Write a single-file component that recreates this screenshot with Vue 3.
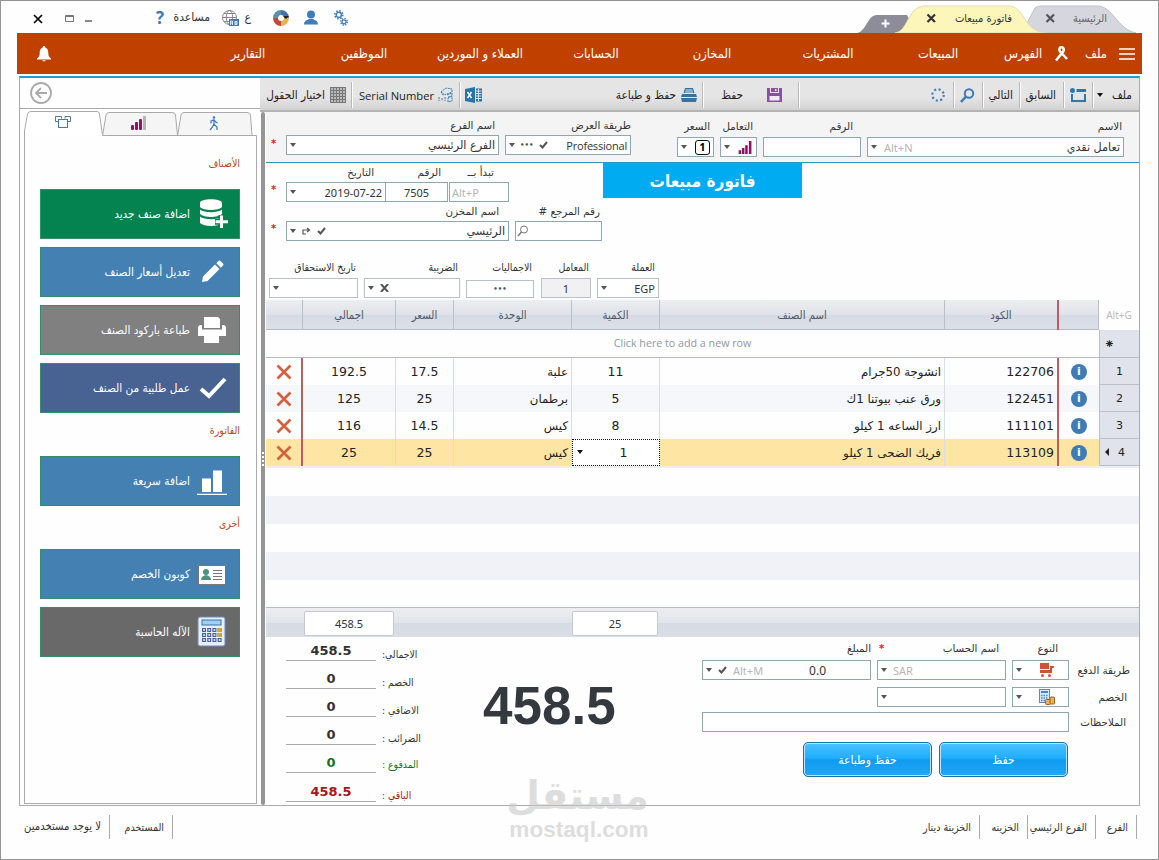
<template>
  <div class="window">
    <header class="titlebar">
      <svg class="win-close" viewBox="0 0 10 10"><path d="M1 1l8 8M9 1l-8 8" stroke="#000" stroke-width="1.7" /></svg>
      <svg class="win-max" viewBox="0 0 10 8"><path d="M.5 .5h8v6h-8zM.5 1.5h8" fill="none" stroke="#777" /></svg>
      <i class="win-min"></i>
      <b class="help">?</b>
      <span class="help-text ar">مساعدة</span>
      <svg class="globe" viewBox="0 0 17 17">
        <g fill="none" stroke="#888" stroke-width="1">
          <circle cx="7.5" cy="7.5" r="7" />
          <ellipse cx="7.5" cy="7.5" rx="3.2" ry="7" />
          <path d="M.5 7.5h14M2 3.5h11M2 11.5h11" />
        </g>
        <rect x="7" y="9" width="10" height="7" fill="#3f78b5" />
        <path d="M8.500 15v-4h2v4M8.500 13h2M13 11v4M13 11.500h2v3h-2M13 13h2" fill="none" stroke="#fff" stroke-width=".8" />
      </svg>
      <span class="lang ar">ع</span>
      <svg class="wheel" viewBox="0 0 16 16">
        <g fill="none" stroke-width="5">
          <path d="M8 2.500a5.500 5.500 0 0 1 5.500 5.500" stroke="#466fae" />
          <path d="M13.500 8a5.500 5.500 0 0 1-5.500 5.500" stroke="#e8b34c" />
          <path d="M8 13.500a5.500 5.500 0 0 1-5.500-5.500" stroke="#c8453a" />
          <path d="M2.500 8a5.500 5.500 0 0 1 5.500-5.500" stroke="#5794a6" />
        </g>
        <path d="M10 6h6l-3 3z" fill="#222" />
      </svg>
      <svg class="user" viewBox="0 0 14 15"><circle cx="7" cy="4.500" r="4" fill="#3f7dbb" /><path d="M0 14.500c0-4 3-4 5-5.500h4c2 1.500 5 1.500 5 5.500z" fill="#3f7dbb" /></svg>
      <svg class="gears" viewBox="0 0 14 16">
        <g fill="none" stroke="#3f7dbb">
          <circle cx="4.800" cy="4.800" r="2.600" stroke-width="1.400" />
          <circle cx="4.800" cy="4.800" r="4" stroke-width="1.600" stroke-dasharray="1.500 1.640" />
          <circle cx="10" cy="11.800" r="2" stroke-width="1.300" />
          <circle cx="10" cy="11.800" r="3.300" stroke-width="1.500" stroke-dasharray="1.300 1.290" />
        </g>
      </svg>

      <div class="doc-tabs">
        <svg viewBox="0 0 284 28">
          <path d="M0 28C10 26 10 10 20 10H50L60 28z" fill="#8d8d99" />
          <path d="M165 28L178 3Q180 1 184 1H240C256 1 260 24 279 28z" fill="#d6d7de" stroke="#bfc0c8" />
          <path d="M38 28C52 26 50 1 68 1H151C168 1 166 26 188 28z" fill="#fcf6ba" stroke="#e3dcb0" />
          <path d="M24.500 18.500h8M28.500 14.500v8" stroke="#fff" stroke-width="2" />
          <path d="M70.500 9.500l7.500 7.500M78 9.500l-7.500 7.500" stroke="#333" stroke-width="2.200" />
          <path d="M189.500 9.500l7.500 7.500M197 9.500l-7.500 7.500" stroke="#555" stroke-width="2.200" />
        </svg>
        <span class="doc-active ar">فاتورة مبيعات</span>
        <span class="doc-home ar">الرئيسية</span>
      </div>
    </header>

    <nav class="menu">
      <svg class="bell" viewBox="0 0 14 16"><path d="M7 0c1 0 1.200.7 1.200 1.400C11 2.300 11.300 5 11.300 7c0 3 .7 4 2.700 5.500v1H0v-1C2 11 2.700 10 2.700 7c0-2 .3-4.700 3.100-5.600C5.800.7 6 0 7 0zM5.300 14.200h3.400c-.2 1.600-3.200 1.600-3.400 0z" fill="#fff" /></svg>
      <span v-for="item in menu" :key="item" class="ar">{{ item }}</span>
      <svg class="ribbon" viewBox="0 0 13 16"><path d="M1 14.500L8.500 5C9.300 3 8.300 1.200 6.500 1.200S4 3 4.700 5L12 13" fill="none" stroke="#fff" stroke-width="2.500" /></svg>
      <span class="ar">ملف</span>
      <svg class="burger" viewBox="0 0 16 12"><path d="M0 1h16M0 6h16M0 11h16" stroke="#fff" stroke-width="1.300" /></svg>
    </nav>

    <div class="frame">
      <aside>
        <div class="back">
          <svg viewBox="0 0 22 22"><circle cx="11" cy="11" r="10" fill="none" stroke="#aaa" stroke-width="1.800" /><path d="M17 11H6M11 6l-5 5 5 5" fill="none" stroke="#aaa" stroke-width="1.800" /></svg>
        </div>
        <svg class="side-tabs" viewBox="0 0 233 28">
          <g fill="#f5f5f5" stroke="#aaa">
            <path d="M78.500 27L82 6Q82.500 3.500 85 3.500H148Q151 3.500 151.500 6L153.500 26.500" />
            <path d="M153.500 27L157 6Q157.500 3.500 160 3.500H223Q226 3.500 226.500 6L228 26.500" />
          </g>
          <path d="M.5 28V22L3.500 5Q4 2.500 7 2.500H73Q75 2.500 75.500 5L78.500 26.500H232.500V28" fill="#fff" stroke="#aaa" />
          <g fill="#fff" stroke="#4d7a97"><path d="M36 12.500h-4.500v-5h6v2M41 9.500v-2h5.500v5H44" /><rect x="34.500" y="10.500" width="9" height="8" /></g>
          <g fill="#970d67"><rect x="107" y="16" width="3" height="5" rx="1" /><rect x="111" y="13" width="3" height="8" rx="1" /><rect x="115" y="10" width="3" height="11" rx="1" /></g>
          <rect x="119" y="7" width="3" height="14" fill="#b5b5b5" />
          <g fill="none" stroke="#3f7dbb" stroke-width="1.300"><circle cx="190" cy="8.500" r="1.300" fill="#3f7dbb" stroke="none" /><path d="M190 10.500v5l3 2.500v3M190 15l-1.500 3-2.500 3M187 14.500v-2.500l3-1.200 1.500 2 2 1.200" /></g>
        </svg>
        <div class="side-panel">
          <h4 class="ar">الأصناف</h4>
          <button class="green">
            <span class="ar">اضافة صنف جديد</span>
            <svg viewBox="0 0 34 34"><g fill="#fff"><path d="M4 6c0-5 22-5 22 0v4c-3 4-19 4-22 0zM4 12.500c4 3.500 18 3.500 22 0V17c-4 4-18 4-22 0zM4 19.500c4 3.500 18 3.500 22 0V26c-4 4-18 4-22 0z" /></g><path d="M25.500 18v13.500M19 24.700h13" stroke="#048351" stroke-width="6" /><path d="M25.500 18.500v12.500M19.500 24.700H32" stroke="#fff" stroke-width="3" /></svg>
          </button>
          <button class="blue">
            <span class="ar">تعديل أسعار الصنف</span>
            <svg viewBox="0 0 34 34"><path d="M6 27l1-5.500 12-12 4.500 4.500-12 12zM20.300 8.200l2.200-2.200q1-1 2 0l2.500 2.500q1 1 0 2l-2.200 2.200z" fill="#fff" /></svg>
          </button>
          <button class="gray">
            <span class="ar">طباعة باركود الصنف</span>
            <svg viewBox="0 0 34 34"><path d="M8 4h14l2 2v9H8z" fill="#fff" /><path d="M2 15q0-3 3-3h1v4.500h20V12h1q3 0 3 3v8H2z" fill="#fff" /><path d="M8 21h15v9H8z" fill="#fff" /></svg>
          </button>
          <button class="navy">
            <span class="ar">عمل طلبية من الصنف</span>
            <svg viewBox="0 0 34 34"><path d="M5 18l8 7L29 8" fill="none" stroke="#fff" stroke-width="4" /></svg>
          </button>
          <h4 class="ar mid">الفاتورة</h4>
          <button class="blue">
            <span class="ar">اضافة سريعة</span>
            <svg viewBox="0 0 34 34"><path d="M6 14.500h9V28H6zM17 6.500h9V28h-9zM1 29.800h30v1.200H1z" fill="#fff" /></svg>
          </button>
          <h4 class="ar mid">أخرى</h4>
          <button class="blue">
            <span class="ar">كوبون الخصم</span>
            <svg viewBox="0 0 34 34"><rect x="2.500" y="8.500" width="27" height="19" fill="#fff" stroke="#777" /><circle cx="10" cy="15" r="3" fill="#4d9382" /><path d="M5 23q0-4 5-5 5 1 5 5z" fill="#4d9382" /><path d="M17 13.500h9M17 16.500h9M17 19.500h9M17 22.500h9" stroke="#777" /></svg>
          </button>
          <button class="dark">
            <span class="ar">الآله الحاسبة</span>
            <svg viewBox="0 0 34 34">
              <rect x="2" y="2" width="27" height="29" rx="2" fill="#e6effb" stroke="#6f8cba" /><rect x="6" y="5" width="19" height="5" fill="#9ed0ef" stroke="#3d75ad" />
              <path d="M6 15h20M6 20h20M6 25h20" stroke="#4562a5" stroke-width="4" stroke-dasharray="4 1.200" /><path d="M7.200 15h18M7.200 20h18M7.200 25h18" stroke="#fff" stroke-width="1.600" stroke-dasharray="1.700 3.500" />
              <path d="M21.700 15h4M21.700 20h4" stroke="#d7a33a" stroke-width="4" />
            </svg>
          </button>
        </div>
      </aside>

      <main>
        <div class="toolbar">
          <div class="c1"><span class="ar">اختيار الحقول</span>
            <svg width="16" height="16" viewBox="0 0 16 16"><rect width="16" height="16" fill="#bbb" /><path d="M.5 0v16M3.500 0v16M6.500 0v16M9.500 0v16M12.500 0v16M15.500 0v16M0 .5h16M0 3.500h16M0 6.500h16M0 9.500h16M0 12.500h16M0 15.500h16" stroke="#777" /></svg>
          </div>
          <div class="c2"><span class="serial">Serial Number</span>
            <svg width="16" height="16" viewBox="0 0 16 16"><path d="M3 5l5-4 6 1v3l-5 2-4 1zM9 8l5-2v3l-4 1M10 11l4-2v5l-4 1zM1 10v4M4 11v3M7 10v4M3 5l3 2" fill="none" stroke="#4080b0" stroke-dasharray="2 .7" /></svg>
          </div>
          <div class="c3">
            <svg width="17" height="16" viewBox="0 0 17 16"><path d="M0 2l10-2v16L0 14zM11 1.500h6v13h-6z" fill="#2474ae" /><path d="M11 4h5.500M11 6.500h5.500M11 9h5.500M11 11.500h5.500M13.500 2v12" stroke="#e4e4e4" /><path d="M2.500 5l4 6M6.500 5l-4 6" stroke="#fff" stroke-width="1.500" /></svg>
            <span class="ar">حفظ و طباعة</span>
            <svg width="16" height="14" viewBox="0 0 16 14"><path d="M4 0h8l1.500 5h-11zM1 6h14l1 3H0zM0 10h16l-1 4H1z" fill="#2f76a8" /><path d="M4.500 2h7M4 4h8" stroke="#e4e4e4" /></svg>
          </div>
          <div class="c4"><span class="ar">حفظ</span>
            <svg width="15" height="14" viewBox="0 0 15 14"><path d="M0 0h3v5h9V0h3v14H0z" fill="#8a4fa3" /><path d="M4 0h7v4H4z" fill="#8a4fa3" /><path d="M8 1h1.500v2H8zM2.500 8h10v4.500h-10z" fill="#eee" /></svg>
          </div>
          <div class="c5">
            <svg width="14" height="14" viewBox="0 0 14 14"><circle cx="7" cy="7" r="5.700" fill="none" stroke="#3f7dbb" stroke-width="2.200" stroke-dasharray="2 2.470" /></svg>
          </div>
          <div class="c6">
            <svg width="15" height="15" viewBox="0 0 15 15"><circle cx="9" cy="5.500" r="4.200" fill="none" stroke="#3d7ab5" stroke-width="2" /><path d="M6 8.500L1 14" stroke="#3d7ab5" stroke-width="2.600" /></svg>
          </div>
          <div class="c7"><span class="ar">التالي</span></div>
          <div class="c8"><span class="ar">السابق</span></div>
          <div class="c9">
            <svg width="16" height="15" viewBox="0 0 16 15"><circle cx="2.500" cy="2.500" r="2.500" fill="#2f78ac" /><path d="M6.500 1H16v3H6.500zM1 6h2v6h11V6h2v8H1z" fill="#2f78ac" /></svg>
          </div>
          <div class="c10"><i class="caret dark"></i><span class="ar">ملف</span></div>
        </div>

        <div class="body">
          <div class="splitter"><i></i></div>
          <div class="content">
            <section class="party">
              <b class="star">*</b>
              <div class="field branch"><label>اسم الفرع</label><div class="box"><i class="caret"></i><span class="ar end">الفرع الرئيسي</span></div></div>
              <div class="field view"><label>طريقة العرض</label><div class="box"><i class="caret"></i><b class="dots">•••</b><svg class="tick" viewBox="0 0 9 8"><path d="M1 4l2.500 2.500L8 1" fill="none" stroke="#555" stroke-width="2" /></svg><span class="end pro">Professional</span></div></div>
              <div class="field price low"><label>السعر</label><div class="box"><i class="caret"></i><b class="one end">1</b></div></div>
              <div class="field deal low"><label>التعامل</label><div class="box"><i class="caret"></i><svg class="bars end" viewBox="0 0 15 15"><path d="M1.500 15v-4M5 15V8.500M8.500 15V5.500M12.500 15V1" stroke="#970d67" stroke-width="2.700" /></svg></div></div>
              <div class="field no low"><label>الرقم</label><div class="box"></div></div>
              <div class="field name low"><label>الاسم</label><div class="box"><i class="caret"></i><span class="hint">Alt+N</span><span class="ar end">تعامل نقدي</span></div></div>
            </section>

            <section class="doc">
              <div class="doc-left">
                <div class="row first">
                  <b class="star">*</b>
                  <div class="field date"><label>التاريخ</label><div class="box"><i class="caret"></i><span class="end">2019-07-22</span></div></div>
                  <div class="field num"><label>الرقم</label><div class="box center">7505</div></div>
                  <div class="field starts"><label>تبدأ بــ</label><div class="box"><span class="hint">Alt+P</span></div></div>
                </div>
                <div class="row">
                  <b class="star">*</b>
                  <div class="field store"><label>اسم المخزن</label><div class="box"><i class="caret"></i><svg class="turn" viewBox="0 0 9 8"><path d="M4 7H1V3h6M5 1l2.500 2L5 5" fill="none" stroke="#555" stroke-width="1.200" /></svg><svg class="tick" viewBox="0 0 9 8"><path d="M1 4l2.500 2.500L8 1" fill="none" stroke="#555" stroke-width="2" /></svg><span class="ar end">الرئيسي</span></div></div>
                  <div class="field ref"><label>رقم المرجع #</label><div class="box"><svg class="lens" viewBox="0 0 12 12"><circle cx="7" cy="4.500" r="3.500" fill="none" stroke="#777" /><path d="M4.500 7L1 11" stroke="#777" stroke-width="1.500" /></svg></div></div>
                </div>
                <div class="row last">
                  <div class="field due"><label>تاريخ الاستحقاق</label><div class="box"><i class="caret"></i></div></div>
                  <div class="field tax"><label>الضريبة</label><div class="box"><i class="caret"></i><svg class="tick" viewBox="0 0 9 8"><path d="M1 0l7 8M8 0L1 8" stroke="#555" stroke-width="2" /></svg></div></div>
                  <div class="field sums"><label>الاجماليات</label><div class="box center"><b class="dots">•••</b></div></div>
                  <div class="field factor"><label>المعامل</label><div class="box center">1</div></div>
                  <div class="field currency"><label>العملة</label><div class="box"><i class="caret"></i><span class="end">EGP</span></div></div>
                </div>
              </div>
              <h1 class="ar">فاتورة مبيعات</h1>
            </section>

            <section class="items">
              <div class="line head">
                <span></span><span class="ar">اجمالي</span><span class="ar">السعر</span><span class="ar">الوحدة</span><span class="ar">الكمية</span><span class="ar">اسم الصنف</span><span class="ar code">الكود</span><span></span><span class="corner">Alt+G</span>
              </div>
              <div class="add"><span>Click here to add a new row</span><b>⁕</b></div>
              <div v-for="(row, i) in rows" :key="row.code" class="line data" :class="{ odd: i % 2, active: i === 3 }">
                <span class="del"><svg viewBox="0 0 16 16"><path d="M1.500 1.500l13 13M14.500 1.500l-13 13" stroke="#d2613f" stroke-width="2.700" /></svg></span>
                <span>{{ row.total }}</span>
                <span>{{ row.price }}</span>
                <span class="ar right">{{ row.unit }}</span>
                <span class="qty"><i v-if="i === 3" class="caret dark"></i>{{ row.qty }}</span>
                <span class="ar right">{{ row.name }}</span>
                <span class="right code">{{ row.code }}</span>
                <span class="info"><b>i</b></span>
                <span class="index"><i v-if="i === 3"></i>{{ i + 1 }}</span>
              </div>
              <div class="empty"></div>
              <div class="sum"><span class="sum-total">458.5</span><span class="sum-qty">25</span></div>
            </section>

            <section class="bottom">
              <div class="totals">
                <div v-for="t in totals" :key="t.label" :class="t.tone"><b>{{ t.value }}</b><span class="ar">{{ t.label }}</span></div>
              </div>
              <div class="grand">458.5</div>
              <div class="pay">
                <div class="pay-labels"><label>المبلغ</label><b class="star">*</b><label>اسم الحساب</label><label>النوع</label></div>
                <div class="pay-row">
                  <div class="box amount"><i class="caret"></i><svg class="tick" viewBox="0 0 9 8"><path d="M1 4l2.500 2.500L8 1" fill="none" stroke="#555" stroke-width="2" /></svg><span class="hint">Alt+M</span><span class="zero">0.0</span></div>
                  <div class="box account"><i class="caret"></i><span class="hint">SAR</span></div>
                  <div class="box type"><i class="caret"></i><svg class="type-icon" viewBox="0 0 16 16"><path d="M1 1h9v6H1zM1 8h10V4h4v2h-2v5H1z" fill="#d0532f" /><circle cx="3.500" cy="13.500" r="1.500" fill="#d0532f" /><circle cx="10.500" cy="13.500" r="1.500" fill="#d0532f" /></svg></div>
                  <label>طريقة الدفع</label>
                </div>
                <div class="pay-row second">
                  <div class="box account"><i class="caret"></i></div>
                  <div class="box type"><i class="caret"></i><svg class="type-icon" viewBox="0 0 16 16"><rect x=".5" y=".5" width="10" height="13" fill="#dbe9fa" stroke="#5b87c5" /><path d="M2 3h7" stroke="#4b83c5" stroke-width="2" /><path d="M2 6.500h7M2 9h7M2 11.500h7" stroke="#5b7fb5" stroke-width="1.500" stroke-dasharray="1.500 1" /><rect x="6.500" y="10.500" width="5" height="5" rx="1" fill="#eeb05a" stroke="#a0611f" /><rect x="11" y="8" width="4.500" height="7" rx="1" fill="#eeb05a" stroke="#a0611f" /></svg></div>
                  <label>الخصم</label>
                </div>
                <div class="pay-row third"><div class="box notes"></div><label>الملاحظات</label></div>
                <div class="actions"><button class="ar">حفظ وطباعة</button><button class="ar">حفظ</button></div>
              </div>
            </section>
          </div>
        </div>
      </main>
    </div>

    <footer>
      <span class="ar f1">لا يوجد مستخدمين</span><span class="ar f2">المستخدم</span>
      <span class="ar f3">الخزينة دينار</span><span class="ar f4">الخزينه</span><span class="ar f5">الفرع الرئيسي</span><span class="ar f6">الفرع</span>
    </footer>
    <div class="watermark"><b class="ar">مستقل</b><span>mostaql.com</span></div>
  </div>
</template>

<script setup>
const menu = ["التقارير", "الموظفين", "العملاء و الموردين", "الحسابات", "المخازن", "المشتريات", "المبيعات", "الفهرس"];

const rows = [
  { code: "122706", name: "انشوجة 50جرام", qty: 11, unit: "علبة", price: "17.5", total: "192.5" },
  { code: "122451", name: "ورق عنب بيوتنا 1ك", qty: 5, unit: "برطمان", price: "25", total: "125" },
  { code: "111101", name: "ارز الساعه 1 كيلو", qty: 8, unit: "كيس", price: "14.5", total: "116" },
  { code: "113109", name: "فريك الضحى 1 كيلو", qty: 1, unit: "كيس", price: "25", total: "25" }
];

const totals = [
  { label: "الاجمالي:", value: "458.5" },
  { label: "الخصم :", value: "0" },
  { label: "الاضافي :", value: "0" },
  { label: "الضرائب :", value: "0" },
  { label: "المدفوع :", value: "0", tone: "paid" },
  { label: "الباقي :", value: "458.5", tone: "rest" }
];
</script>

<style>
body {
  margin: 0;
  overflow: hidden;
}
</style>

<style scoped>
* {
  box-sizing: border-box;
}

.window {
  position: relative;
  width: 1159px;
  height: 860px;
  border: 1px solid #949494;
  background: #fefefe;
  color: #333;
  font: 11px "Noto Sans", sans-serif;
}

.ar,
label {
  direction: rtl;
  white-space: nowrap;
  font-family: "DejaVu Sans Condensed", "DejaVu Sans", sans-serif;
}

svg {
  display: block;
  flex: none;
}

button {
  padding: 0;
  cursor: pointer;
}

/* title bar */
.titlebar {
  display: flex;
  align-items: center;
  height: 32px;
}

.win-close {
  width: 10px;
  height: 10px;
  margin: 3px 0 0 32px;
}

.win-max {
  width: 10px;
  height: 8px;
  margin: 3px 0 0 22px;
}

.win-min {
  width: 7px;
  height: 2px;
  margin: 8px 0 0 10px;
  background: #888;
}

.help {
  width: 9px;
  margin-left: 64px;
  color: #3f78b5;
  font: bold 17px "Open Sans", sans-serif;
}

.help-text {
  width: 38px;
  margin-left: 7px;
  font-size: 12px;
}

.globe {
  width: 17px;
  height: 17px;
  margin: 2px 0 0 12px;
}

.lang {
  width: 7px;
  margin-left: 5px;
  font-size: 12px;
}

.wheel {
  width: 16px;
  height: 16px;
  margin: 1px 0 0 22px;
}

.user {
  width: 14px;
  height: 15px;
  margin: 1px 0 0 15px;
}

.gears {
  width: 14px;
  height: 16px;
  margin: 2px 0 0 16px;
}

.doc-tabs {
  position: relative;
  width: 284px;
  height: 28px;
  margin: 4px 17px 0 auto;
  font-size: 11px;
}

.doc-tabs svg {
  width: 284px;
  height: 28px;
}

.doc-active,
.doc-home {
  position: absolute;
  top: 7px;
}

.doc-active {
  right: 129px;
}

.doc-home {
  right: 34px;
  color: #666;
}

/* main menu */
.menu {
  display: grid;
  grid-template-columns: 173px repeat(6, 116px) 104px 66px 20px 40px 26px;
  align-items: center;
  height: 41px;
  margin: 0 16px;
  background: #c04000;
  color: #fff;
  font-size: 12.800px;
  line-height: 16px;
  text-align: center;
}

.bell {
  width: 14px;
  height: 16px;
  margin-left: 20px;
}

.ribbon {
  width: 13px;
  height: 16px;
  margin-left: -1px;
}

.burger {
  width: 16px;
  height: 12px;
  margin-left: 3px;
}

/* frame */
.frame {
  display: flex;
  width: 1121px;
  height: 730px;
  margin: 2px 0 0 18px;
  border: 1px solid #aaa;
  border-top: 2px solid #1c9fd3;
}

aside {
  width: 240px;
}

.back {
  height: 31px;
  padding: 4px 0 0 10px;
  border-bottom: 1px solid #aaa;
}

.back svg {
  width: 22px;
  height: 22px;
}

.side-tabs {
  width: 233px;
  height: 28px;
  margin-left: 4px;
}

.side-panel {
  width: 233px;
  height: 667px;
  margin-left: 4px;
  padding: 19px 16px 0 15px;
  border: 1px solid #aaa;
  border-top: 0;
}

.side-panel h4 {
  height: 14px;
  margin: 0 0 19px;
  color: #b5481d;
  font-size: 10.500px;
  font-weight: normal;
  line-height: 14px;
}

.side-panel h4.mid {
  margin-top: 10px;
}

.side-panel button {
  display: flex;
  align-items: center;
  justify-content: flex-end;
  gap: 6px;
  width: 200px;
  height: 50px;
  margin-bottom: 8px;
  padding-right: 9px;
  border: 1px solid #2f9168;
  color: #fff;
  font-size: 11.700px;
}

.side-panel button svg {
  width: 34px;
  height: 34px;
}

.green {
  background: #048351;
}

.blue {
  background: #4580b3;
}

.gray {
  background: #808080;
}

.navy {
  background: #486292;
}

.side-panel .dark {
  background: #696969;
}

/* toolbar */
main {
  width: 879px;
}

.toolbar {
  display: flex;
  width: 879px;
  height: 34px;
  padding-bottom: 2px;
  border-bottom: 2px solid #b2b2b2;
  background: linear-gradient(#e5e5e5 60%, #d2d2d2);
  color: #222;
  font-size: 11.700px;
}

.toolbar > div {
  display: flex;
  align-items: center;
  justify-content: flex-end;
  margin: 4px 0 0;
  border-right: 1px solid #fff;
  box-shadow: inset -1px 0 #b9b9b9;
}

.toolbar .c1 {
  width: 93px;
  gap: 5px;
  padding-right: 6px;
}

.toolbar .c2 {
  width: 108px;
  gap: 4px;
  padding-right: 6px;
}

.serial {
  white-space: nowrap;
  font: 11.200px "Open Sans", sans-serif;
}

.toolbar .c3 {
  width: 243px;
  gap: 5px;
  padding: 0 6px 0 4px;
}

.c3 svg:first-child {
  margin-right: auto;
}

.toolbar .c4 {
  width: 96px;
  gap: 24px;
  padding-right: 17px;
}

.toolbar .c5 {
  width: 155px;
  padding-right: 9px;
}

.toolbar .c6 {
  width: 29px;
  padding-right: 8px;
}

.toolbar .c7 {
  width: 37px;
  padding-right: 7px;
}

.toolbar .c8 {
  width: 44px;
  padding-right: 8px;
}

.toolbar .c9 {
  width: 29px;
  padding-right: 7px;
}

.toolbar .c10 {
  width: 45px;
  gap: 9px;
  padding-right: 7px;
  border: 0;
  box-shadow: none;
}

.caret {
  width: 0;
  height: 0;
  border: 3.500px solid transparent;
  border-top: 4px solid #555;
  border-bottom: 0;
}

.caret.dark {
  border-top-color: #111;
}

/* body */
.body {
  display: flex;
  height: 693px;
}

.splitter {
  width: 4px;
  margin: 0 1px;
  border-radius: 2px;
  background: #959595;
}

.splitter i {
  display: block;
  width: 2px;
  height: 14px;
  margin: 340px 0 0 1px;
  background: repeating-linear-gradient(#fff 0 2px, #959595 2px 4px);
}

.content {
  display: flex;
  flex-direction: column;
  width: 873px;
}

.field {
  display: flex;
  flex: none;
  flex-direction: column;
}

.field label {
  align-self: flex-end;
  height: 17px;
  font-family: "DejaVu Sans", sans-serif;
  font-size: 10.300px;
  line-height: 14px;
}

.box {
  display: flex;
  align-items: center;
  height: 20px;
  padding: 0 3px;
  border: 1px solid #8fa6b5;
  background: #fff;
}

.box .ar {
  font-family: "DejaVu Sans", sans-serif;
  font-size: 11.200px;
}

.box.center {
  justify-content: center;
}

.end {
  margin-left: auto;
}

.pro {
  font: 11px "Open Sans", sans-serif;
  letter-spacing: -0.2px;
}

.hint {
  margin-left: 6px;
  color: #b5b5b5;
}

.dots {
  margin-left: 5px;
  color: #555;
  font: bold 7px "DejaVu Sans", sans-serif;
}

.center .dots {
  margin: 0;
}

.tick,
.turn {
  width: 9px;
  height: 8px;
  margin-left: 6px;
}

.star {
  color: #d22;
  font: bold 10px "DejaVu Sans", sans-serif;
}

.party {
  display: flex;
  height: 51px;
  padding: 6px 0 0 5px;
  border-bottom: 1px solid #2b97c4;
  background: #f4f4f4;
}

.party .star,
.row .star {
  width: 15px;
  margin-top: 20px;
}

.low label {
  height: 19px;
  line-height: 16px;
}

.branch {
  width: 213px;
}

.branch label {
  padding-right: 4px;
}

.view {
  width: 126px;
  margin: 0 46px 0 6px;
}

.price,
.deal {
  width: 37px;
  margin-right: 6px;
}

.price label,
.deal label {
  padding-right: 4px;
}

.one {
  width: 15px;
  height: 15px;
  border: 1.500px solid #111;
  border-radius: 3px;
  color: #000;
  line-height: 12px;
  text-align: center;
}

.bars {
  width: 15px;
  height: 14px;
}

.no {
  width: 98px;
  margin-right: 6px;
}

.no label {
  padding-right: 8px;
}

.name {
  width: 257px;
}

.name label {
  padding-right: 2px;
}

.name .hint {
  margin-left: 7px;
}

.doc {
  display: flex;
  height: 137px;
}

.doc-left {
  width: 337px;
}

.row {
  display: flex;
  padding-left: 5px;
}

.row.first {
  padding-top: 2px;
  height: 41px;
}

.row .star {
  margin-top: 19px;
}

.date {
  width: 100px;
}

.date label {
  padding-right: 12px;
}

.num {
  width: 63px;
  margin-left: -1px;
}

.num label {
  padding-right: 7px;
}

.starts {
  width: 60px;
  margin-left: 1px;
}

.starts label {
  padding-right: 15px;
}

.starts .hint {
  margin-left: -1px;
}

.store {
  width: 223px;
}

.store label {
  padding-right: 10px;
}

.ref {
  width: 87px;
  margin-left: 6px;
}

.ref label {
  padding-right: 2px;
}

.lens {
  width: 12px;
  height: 12px;
  margin-left: -2px;
}

.row.last {
  gap: 6px;
  margin-top: 19px;
  padding-left: 3px;
}

.last label {
  height: 18px;
  padding-right: 2px;
  font-family: "DejaVu Sans Condensed", sans-serif;
  font-size: 10.500px;
}

.last .box {
  border-color: #b5c2cc;
}

.due {
  width: 89px;
}

.tax {
  width: 96px;
}

.sums {
  width: 68px;
}

.sums .box {
  height: 18px;
  margin-top: 2px;
}

.factor {
  width: 50px;
  margin-left: 1px;
}

.factor .box {
  background: #f1f1f3;
}

.currency {
  width: 62px;
}

.last .currency label {
  padding-right: 4px;
}

h1 {
  width: 199px;
  height: 35px;
  margin: 0;
  background: #00abf2;
  color: #fff;
  font-size: 17px;
  line-height: 36px;
  text-align: center;
}

/* items grid */
.line {
  display: grid;
  grid-template-columns: 37px 93px 58px 118px 88px 285px 114px 40px 40px;
}

.line > span {
  display: flex;
  align-items: center;
  justify-content: center;
  border-right: 1px solid #d9dee2;
}

.head {
  height: 30px;
  border-bottom: 1px solid #b3bbc5;
  background: linear-gradient(#eceef1, #dfe2e9 50%, #d6dae4 52%, #dde0e9);
  color: #4d5a66;
  font-size: 11.300px;
}

.head > span {
  border-color: #b9c0ca;
}

.line > .code {
  border-right: 2px solid #b9605e;
}

.head > .corner {
  border: 0;
  height: 30px;
  background: #fefefe;
  color: #bbb;
  font-size: 10px;
}

.add {
  display: flex;
  height: 28px;
  border-bottom: 1px solid #b3bbc5;
  color: #8f99a2;
}

.add span {
  width: 833px;
  font: 10.700px/27px "Open Sans", sans-serif;
  text-align: center;
}

.add b {
  width: 40px;
  padding-left: 4px;
  border-left: 1px solid #b9c0ca;
  background: #e0e3eb;
  color: #222;
  font: 13px/28px "DejaVu Sans", sans-serif;
}

.data {
  height: 27px;
  color: #222;
  font: 12.500px "DejaVu Sans", sans-serif;
}

.data .ar {
  font-family: "DejaVu Sans", sans-serif;
  font-size: 11.800px;
}

.data > .right {
  justify-content: flex-start;
  padding-right: 3px;
}

.data > .right.code {
  justify-content: flex-end;
}

.data.odd {
  background: #f6f7fa;
}

.data.active {
  background: #ffe5a3;
}

.data > .del {
  border-right: 2px solid #b9605e;
}

.del svg {
  width: 16px;
  height: 16px;
}

.active > .qty {
  position: relative;
  padding-left: 15px;
  border: 1px dotted #111;
  background: #fff;
}

.qty .caret {
  position: absolute;
  left: 4px;
  top: 10px;
}

.info b {
  width: 16px;
  height: 16px;
  border-radius: 8px;
  background: #3f7bb5;
  color: #fff;
  font: bold 11px/16px "DejaVu Sans", sans-serif;
  text-align: center;
}

.line > .info {
  border: 0;
}

.line > .index {
  gap: 9px;
  border: 0;
  border-bottom: 1px solid #b9c0ca;
  border-left: 1px solid #b9c0ca;
  background: #e0e3eb;
  font-size: 11px;
}

.index i {
  margin-left: -9px;
  border: 4px solid transparent;
  border-right-color: #222;
  border-left: 0;
}

.empty {
  height: 141px;
  border-top: 2px solid #eee;
  background: repeating-linear-gradient(#fefefe 0 28px, #f0f2f8 28px 56px);
}

.sum {
  display: flex;
  height: 30px;
  padding: 3px 0 0 38px;
  border-top: 1px solid #b5bbc5;
  background: linear-gradient(#eceef1, #e1e4ea 50%, #d7dbe4 52%, #dadee7);
}

.sum span {
  height: 25px;
  border: 1px solid #c3cad2;
  border-radius: 2px;
  background: #fff;
  line-height: 24px;
  text-align: center;
}

.sum-total {
  width: 90px;
}

.sum-qty {
  width: 86px;
  margin-left: 178px;
}

/* totals and payment */
.bottom {
  display: flex;
}

.totals {
  width: 217px;
  padding-left: 20px;
}

.totals div {
  display: flex;
  height: 28px;
}

.totals b {
  width: 90px;
  padding-top: 9px;
  border-bottom: 1px solid #aaa;
  font: bold 13px/18px "DejaVu Sans", sans-serif;
  text-align: center;
}

.totals div:first-child {
  height: 24px;
}

.totals div:first-child b {
  padding-top: 5px;
}

.totals span {
  align-self: flex-end;
  margin: 0 0 1px 6px;
  font-size: 10.300px;
}

.totals .paid {
  color: #16752a;
}

.totals .paid span {
  margin-bottom: 3px;
}

.totals .rest {
  height: 29px;
  color: #a51717;
}

.totals .rest b {
  padding-top: 10px;
}

.grand {
  width: 219px;
  padding-top: 39px;
  color: #33393f;
  font: bold 53px/60px "Liberation Sans", sans-serif;
}

.pay {
  width: 437px;
}

.pay-labels {
  display: flex;
  height: 23px;
  padding-top: 5px;
}

.pay-labels label,
.pay-row label {
  font-family: "DejaVu Sans", sans-serif;
  font-size: 10.300px;
}

.pay-labels label:first-child {
  width: 169px;
}

.pay-labels .star {
  width: 14px;
  margin-left: 8px;
  line-height: 14px;
}

.pay-labels label:nth-child(3) {
  width: 106px;
}

.pay-labels label:nth-child(4) {
  width: 59px;
}

.pay-row {
  display: flex;
  align-items: center;
  gap: 6px;
  height: 20px;
}

.pay-row label {
  width: 53px;
  margin-left: 2px;
}

.pay-row.second {
  margin-top: 7px;
  padding-left: 175px;
}

.pay-row.second label {
  width: 50px;
}

.pay-row.third {
  margin-top: 5px;
}

.pay-row.third label {
  width: 49px;
}

.amount {
  width: 169px;
}

.zero {
  margin-left: 46px;
  font: 12px "Noto Sans", sans-serif;
}

.account {
  width: 129px;
}

.type {
  width: 57px;
}

.type-icon {
  width: 16px;
  height: 16px;
  margin-left: 17px;
}

.notes {
  width: 367px;
}

.actions {
  display: flex;
  gap: 7px;
  margin: 10px 0 0 101px;
}

.actions button {
  width: 129px;
  height: 35px;
  border: 1px solid #1472ae;
  border-radius: 5px;
  background: linear-gradient(#4cc2ff, #20aeff 45%, #109bf0 52%, #1fa8f8);
  box-shadow: inset 0 0 0 1px #b9e6ff;
  color: #fff;
  font-size: 12px;
}

/* footer */
footer {
  display: flex;
  align-items: center;
  height: 41px;
  font-size: 10.600px;
}

footer span {
  height: 24px;
  padding-right: 8px;
  border-right: 1px solid #aaa;
  line-height: 24px;
}

.f1 {
  width: 109px;
  font-size: 11.200px;
}

.f2 {
  width: 63px;
}

.f3 {
  width: 807px;
}

.f4 {
  width: 48px;
}

.f5 {
  width: 68px;
}

.f6 {
  width: 41px;
}

.watermark {
  position: absolute;
  top: 770px;
  left: 508px;
  width: 140px;
  color: #c8c8c8;
  opacity: 0.6;
  text-align: center;
}

.watermark b {
  display: block;
  height: 47px;
  font: bold 39px/50px "DejaVu Sans", sans-serif;
}

.watermark span {
  display: block;
  font: bold 22.600px/24px "Liberation Sans", sans-serif;
}
</style>
